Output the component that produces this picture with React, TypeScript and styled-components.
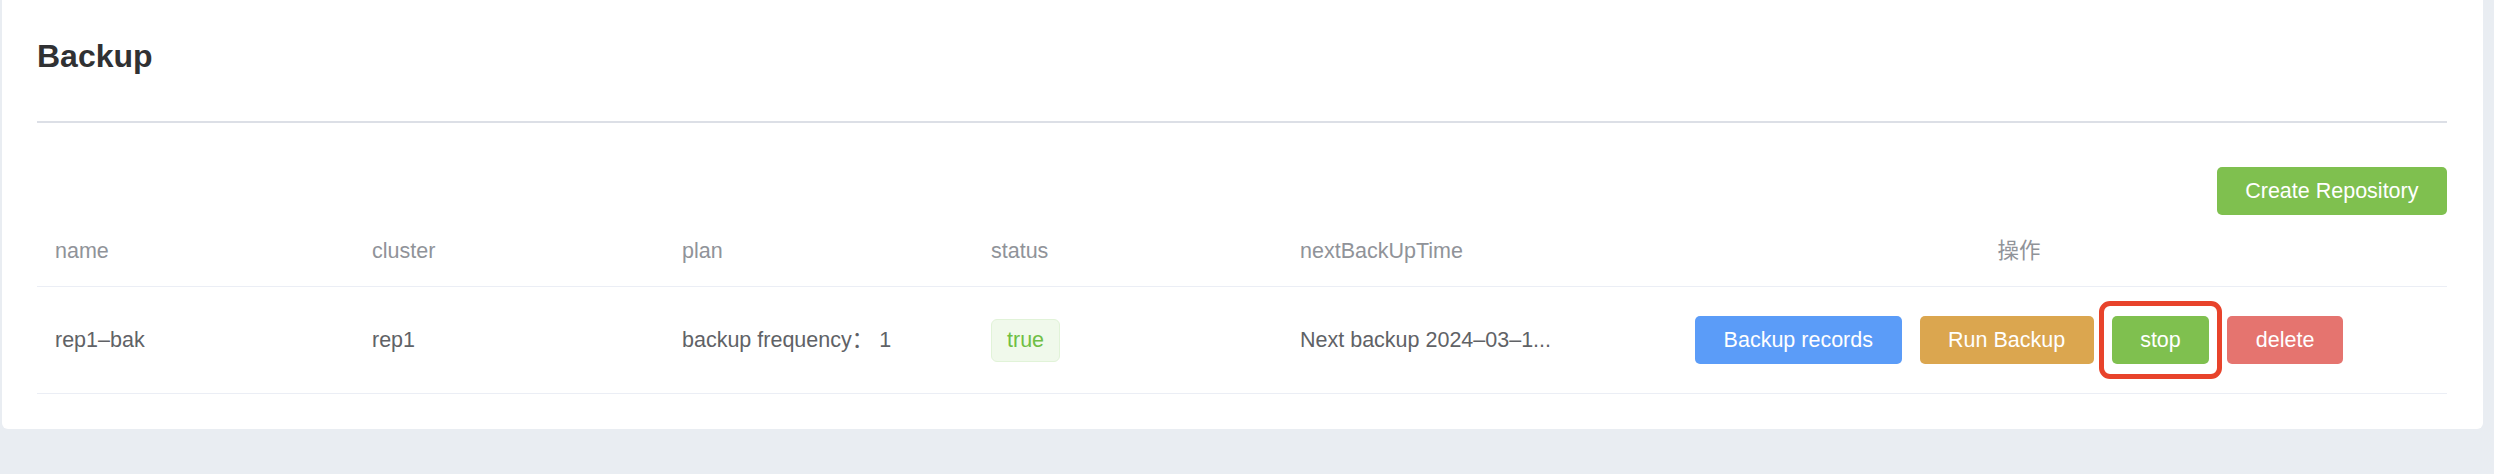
import styled, { createGlobalStyle, css } from 'styled-components';

type Tone = 'primary' | 'warning' | 'success' | 'danger';

interface BackupRow {
  name: string;
  cluster: string;
  plan: string;
  status: string;
  nextBackUpTime: string;
}

const ROWS: BackupRow[] = [
  {
    name: 'rep1–bak',
    cluster: 'rep1',
    plan: 'backup frequency：  1',
    status: 'true',
    nextBackUpTime: 'Next backup 2024–03–1...',
  },
];

const COLUMNS = ['name', 'cluster', 'plan', 'status', 'nextBackUpTime'];

const TONE_COLOR: Record<Tone, string> = {
  primary: '#5b9cf8',
  warning: '#dba64f',
  success: '#7fc04f',
  danger: '#e5746f',
};

function App() {
  return (
    <>
      <GlobalStyle />
      <Page>
        <Card>
          <Title>Backup</Title>
          <Divider />
          <Toolbar>
            <Button $tone="success">Create Repository</Button>
          </Toolbar>
          <Table>
            <Row $head>
              {COLUMNS.map((col) => (
                <HeadCell key={col}>{col}</HeadCell>
              ))}
              <HeadCell $center>操作</HeadCell>
            </Row>
            {ROWS.map((row) => (
              <Row key={row.name}>
                <Cell>{row.name}</Cell>
                <Cell>{row.cluster}</Cell>
                <Cell>{row.plan}</Cell>
                <Cell>
                  <Tag>{row.status}</Tag>
                </Cell>
                <Cell>{row.nextBackUpTime}</Cell>
                <Cell $center>
                  <Actions>
                    <Button $tone="primary">Backup records</Button>
                    <Button $tone="warning">Run Backup</Button>
                    <Button $tone="success" $highlighted>
                      stop
                    </Button>
                    <Button $tone="danger">delete</Button>
                  </Actions>
                </Cell>
              </Row>
            ))}
          </Table>
        </Card>
      </Page>
    </>
  );
}

const GlobalStyle = createGlobalStyle`
  html, body {
    margin: 0;
    padding: 0;
    background: #e9edf2;
  }
  body {
    font-family: "Liberation Sans", "Noto Sans CJK SC", Arial, sans-serif;
  }
  * {
    box-sizing: border-box;
  }
`;

const Page = styled.div`
  min-height: 100vh;
  padding: 0 11px 0 2px;
  background: #e9edf2;
`;

const Card = styled.section`
  display: flex;
  flex-direction: column;
  padding: 38px 36px 35px 35px;
  background: #ffffff;
  border-radius: 0 0 6px 6px;
`;

const Title = styled.h1`
  margin: 0;
  font-size: 32px;
  line-height: 36px;
  font-weight: 700;
  color: #303133;
`;

const Divider = styled.hr`
  margin: 47px 0 0;
  height: 2px;
  border: none;
  background: #dcdfe6;
`;

const Toolbar = styled.div`
  display: flex;
  justify-content: flex-end;
  margin-top: 44px;
`;

const Table = styled.div`
  display: flex;
  flex-direction: column;
`;

const Row = styled.div<{ $head?: boolean }>`
  display: grid;
  grid-template-columns: 317px 310px 309px 309px 309px 1fr;
  align-items: center;
  height: ${({ $head }) => ($head ? '72px' : '107px')};
  border-bottom: 1px solid #ebeef5;
`;

const cellMixin = css<{ $center?: boolean }>`
  padding: 0 18px;
  font-size: 21.5px;
  line-height: 28px;
  white-space: nowrap;
  overflow: hidden;
  text-overflow: ellipsis;
  text-align: ${({ $center }) => ($center ? 'center' : 'left')};
`;

const HeadCell = styled.div<{ $center?: boolean }>`
  ${cellMixin};
  color: #909399;
`;

const Cell = styled.div<{ $center?: boolean }>`
  ${cellMixin};
  color: #606266;
  overflow: visible;
`;

const Tag = styled.span`
  display: inline-flex;
  align-items: center;
  height: 43px;
  padding: 0 15px;
  font-size: 21.5px;
  color: #6fbf44;
  background: #f0f9eb;
  border: 1px solid #e1f3d8;
  border-radius: 6px;
  vertical-align: middle;
`;

const Actions = styled.div`
  display: inline-flex;
  gap: 18px;
  align-items: center;
  vertical-align: middle;
`;

const Button = styled.button<{ $tone: Tone; $highlighted?: boolean }>`
  position: relative;
  display: inline-flex;
  align-items: center;
  justify-content: center;
  height: 48px;
  padding: 0 28.5px;
  font-family: inherit;
  font-size: 21.5px;
  color: #ffffff;
  background: ${({ $tone }) => TONE_COLOR[$tone]};
  border: none;
  border-radius: 5px;
  cursor: pointer;

  ${({ $highlighted }) =>
    $highlighted &&
    css`
      &::after {
        content: '';
        position: absolute;
        inset: -15px -13px -15px -13px;
        border: 5px solid #e8432b;
        border-radius: 11px;
        pointer-events: none;
      }
    `}
`;

export default App;
